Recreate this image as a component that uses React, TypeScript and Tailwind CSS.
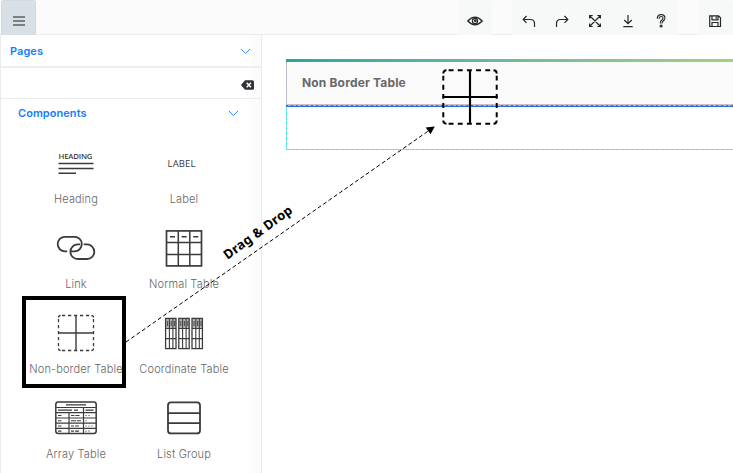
import type { ReactNode } from 'react';

const ink = '#3b3b3b';

function Glyph({ children, w = 18 }: { children: ReactNode; w?: number }) {
  return (
    <svg width={w} height="16" viewBox={`0 0 ${w} 16`} fill="none" stroke="#25282b" strokeWidth="1.2" className="block shrink-0">
      {children}
    </svg>
  );
}

function Chevron() {
  return (
    <svg width="11" height="7" viewBox="0 0 11 7" fill="none" stroke="#3590ff" strokeWidth="1" className="block">
      <path d="M1 1l4.5 4.5L10 1" />
    </svg>
  );
}

function TableCross({ size, color }: { size: number; color: string }) {
  return (
    <svg width={size} height={size} viewBox="0 0 38 38" fill="none" stroke={color} className="block">
      <path d="M5 1.5h28M5 36.5h28M1.5 5v28M36.5 5v28" strokeWidth="1.3" strokeDasharray="3.2 2.8" />
      <path d="M1.5 3.6Q1.5 1.5 3.6 1.5M34.4 1.5Q36.5 1.5 36.5 3.6M36.5 34.4Q36.5 36.5 34.4 36.5M3.6 36.5Q1.5 36.5 1.5 34.4" strokeWidth="1.3" />
      <path d="M19 1.5v35M1 19h36" strokeWidth="1.4" />
    </svg>
  );
}

function HeadingIcon() {
  return (
    <svg width="40" height="40" viewBox="0 0 40 40" className="block overflow-visible">
      <text x="2.5" y="15.5" fontFamily="'Open Sans', sans-serif" fontSize="7.8" fontWeight="600" textLength="34" fill={ink}>HEADING</text>
      <path d="M2.5 20.5h35M2.5 25.5h35M2.5 30.2h17.5" stroke={ink} strokeWidth="1.4" />
    </svg>
  );
}

function LabelIcon() {
  return (
    <svg width="40" height="40" viewBox="0 0 40 40" className="block overflow-visible">
      <text x="3.5" y="23.5" fontFamily="'Open Sans', sans-serif" fontSize="9.5" fontWeight="500" textLength="28" fill={ink}>LABEL</text>
    </svg>
  );
}

function LinkIcon() {
  return (
    <svg width="40" height="40" viewBox="0 0 40 40" fill="none" stroke={ink} strokeWidth="1.8" className="block">
      <path d="M11.2 23.4H9A7.3 7.3 0 0 1 9 8.8h9.5A7.3 7.3 0 0 1 18.5 23.4h-3.7" />
      <path d="M24.2 16.4H21.7a7.3 7.3 0 0 0 0 14.6h9.3a7.3 7.3 0 0 0 0-14.6h-3.3" />
    </svg>
  );
}

function NormalTableIcon() {
  return (
    <svg width="40" height="40" viewBox="0 0 40 40" fill="none" stroke={ink} className="block">
      <rect x="2.5" y="2.9" width="35" height="35" strokeWidth="1.7" />
      <path d="M14.3 3v35M25.8 3v35M2.5 14.4h35M2.5 26.5h35" strokeWidth="1.5" />
      <path d="M6 8.8h5M17.6 8.8h5M29.2 8.8h5" strokeWidth="1.6" />
    </svg>
  );
}

function CoordinateTableIcon() {
  return (
    <svg width="40" height="40" viewBox="0 0 40 40" fill="none" stroke={ink} className="block">
      {[1.6, 14.8, 28].map((x) => (
        <g key={x} transform={`translate(${x} 0)`}>
          <rect x="0" y="5.4" width="10.4" height="10.2" fill="#b9b9b9" stroke="none" />
          <rect x="0" y="5.4" width="10.4" height="30.2" strokeWidth="1.3" />
          <path d="M3.8 5.4v30M7.3 5.4v30M0 15.5h10.4M0 25.6h10.4" strokeWidth="1.1" />
          <path d="M2 8v5M5.6 8v5M9 8v5" strokeWidth="0.9" />
        </g>
      ))}
    </svg>
  );
}

function ArrayTableIcon() {
  return (
    <svg width="42" height="40" viewBox="0 0 42 40" fill="none" stroke={ink} className="block">
      <rect x=".8" y="4" width="40.4" height="31.6" rx="2.5" strokeWidth="1.5" />
      <path d="M1 9.5h40M1 14.6h40M1 20h40M1 25.2h40M1 30.4h40M28.5 9.5v26M14 14.6v21" strokeWidth="1.2" />
      <path d="M11 6.9h20M3 12.1h14M19 12.1h4M30.5 12.1h8" strokeWidth="1.1" />
      <path d="M3 17.5h3.5M3 22.8h3.5M3 28h3.5M3 33.1h3.5M16 17.5h3.5m1 0h4M16 22.8h5m1 0h4M16 28h3m1 0h4M16 33.1h3m1 0h4" strokeWidth="1.1" />
      <path d="M30.5 17.5h1m2 0h1M30.5 22.8h1M30.5 28h1m2 0h1m2 0h1M30.5 33.1h1m2 0h1" strokeWidth="1.1" />
    </svg>
  );
}

function ListGroupIcon() {
  return (
    <svg width="40" height="40" viewBox="0 0 40 40" fill="none" stroke={ink} strokeWidth="1.8" className="block">
      <rect x="4" y="4.4" width="32" height="31" rx="3" />
      <path d="M4 15.2h32M4 25.2h32" />
    </svg>
  );
}

const components: { name: string; icon: ReactNode }[] = [
  { name: 'Heading', icon: <HeadingIcon /> },
  { name: 'Label', icon: <LabelIcon /> },
  { name: 'Link', icon: <LinkIcon /> },
  { name: 'Normal Table', icon: <NormalTableIcon /> },
  { name: 'Non-border Table', icon: <TableCross size={38} color={ink} /> },
  { name: 'Coordinate Table', icon: <CoordinateTableIcon /> },
  { name: 'Array Table', icon: <ArrayTableIcon /> },
  { name: 'List Group', icon: <ListGroupIcon /> },
];

function Toolbar() {
  return (
    <header className="flex h-[35px] shrink-0 border-b border-[#ececec] bg-[#fbfbfb] pl-px">
      <div className="flex h-[35px] w-[35px] items-center justify-center rounded-t-[3px] border border-b-0 border-[#d0d8e0] bg-[#d9dfe7] pt-[6px]">
        <svg width="12" height="10" viewBox="0 0 12 10" fill="none" stroke="#7c8080" strokeWidth="2" className="block">
          <path d="M0 1h12M0 5h12M0 9h12" />
        </svg>
      </div>
      <div className="ml-auto flex h-[35px]">
        <div className="mr-5 flex w-[34px] items-center justify-center rounded-t bg-[#f7f9f8] pt-[7px]">
          <Glyph>
            <path d="M1.8 8Q9 .4 16.2 8Q9 15.6 1.8 8z" />
            <circle cx="9" cy="8" r="2.6" />
            <circle cx="9.3" cy="7.7" r=".8" fill="#25282b" />
          </Glyph>
        </div>
        <div className="mr-5 flex w-[166px] items-center justify-center gap-[15px] rounded-t bg-[#f7f9f8] pt-[7px]">
          <Glyph><path d="M6.5 3L3.2 6.5l3.3 3.3M3.2 6.5h7.3q4 0 4 4V14" /></Glyph>
          <Glyph><path d="M11.5 3l3.3 3.5-3.3 3.3M14.8 6.5H7.5q-4 0-4 4V14" /></Glyph>
          <Glyph><path d="M3.6 5.6V2.5h3.1M11.3 2.5h3.1v3.1M14.4 10.4v3.1h-3.1M6.7 13.5H3.6v-3.1M4 3l10 10M14 3L4 13" /></Glyph>
          <Glyph><path d="M9 2v8.5M5.2 7l3.8 3.7L12.8 7M4.3 13.6h9.4" /></Glyph>
          <Glyph>
            <path d="M6.2 5.8Q6.2 2.5 9.1 2.5Q12 2.5 12 5.1Q12 6.6 10.3 7.7Q9.2 8.4 9.2 10.5" strokeWidth="3" />
            <path d="M6.2 5.8Q6.2 2.5 9.1 2.5Q12 2.5 12 5.1Q12 6.6 10.3 7.7Q9.2 8.4 9.2 10.5" stroke="#f7f9f8" strokeWidth=".9" />
            <circle cx="9.1" cy="13" r="1" />
          </Glyph>
        </div>
        <div className="flex w-[35px] items-center justify-center rounded-t bg-[#f7f9f8] pt-[7px] pr-[2px]">
          <Glyph><path d="M3.7 2.8h8.8l2 2v8.7H3.7zM6 3v3.8h6V3M6 13.4V9.5h6v3.9M10.2 3.7v2" /></Glyph>
        </div>
      </div>
    </header>
  );
}

function Sidebar() {
  return (
    <aside className="w-[261px] shrink-0 border-r border-[#ebebeb] bg-gradient-to-r from-white from-[94%] to-[#fafafa]">
      <div className="flex h-[31px] items-center justify-between pt-[2px] pr-[10px] pl-[9px] text-[11px] font-semibold text-[#167dff]">
        <span className="tracking-[0.05px]">Pages</span>
        <Chevron />
      </div>
      <div className="flex h-8 items-center justify-end border-t-2 border-[#eeeeee] pt-[3px] pr-[7px]">
        <svg width="13" height="10" viewBox="0 0 13 10" className="block">
          <path d="M4 .2h7.5Q13 .2 13 1.7v6.6q0 1.5-1.5 1.5H4L0 5z" fill="#303236" />
          <path d="M5.7 2.7l4.2 4.6M9.9 2.7L5.7 7.3" stroke="white" strokeWidth="1.5" />
        </svg>
      </div>
      <div className="flex h-[31px] items-center justify-between border-t border-[#ececec] pr-[22px] pb-[2px] pl-[17px] text-[11px] font-semibold text-[#167dff]">
        <span className="tracking-[0.05px]">Components</span>
        <Chevron />
      </div>
      <div className="ml-[21px] grid w-[216px] grid-cols-2 pt-[14px]">
        {components.map((item) => (
          <div key={item.name} className="flex h-[85px] flex-col items-center">
            <div className="flex h-10 items-center justify-center">{item.icon}</div>
            <span className="mt-[8px] text-[11px] leading-4 font-light tracking-[0.15px] whitespace-nowrap text-[#666666]">{item.name}</span>
          </div>
        ))}
      </div>
    </aside>
  );
}

function Canvas() {
  return (
    <main className="min-w-0 flex-1 bg-white pt-6 pl-6">
      <div className="h-[3px] bg-gradient-to-r from-[#20a5a5] to-[#a5cf83]" />
      <div className="flex h-[42px] items-center border-l border-[#b8bdc8] bg-[#fafafa] pl-[15px] text-[12px] font-bold text-[#686868]">
        <span className="tracking-[0.17px]">Non Border Table</span>
      </div>
      <div className="h-px bg-[#c4c4c4]" />
      <div className="h-px bg-[repeating-linear-gradient(90deg,#7662a8_0_2px,#48dce8_2px_5px)]" />
      <div className="h-px bg-[#326be1]" />
      <div className="flex h-[43px] flex-col">
        <div className="w-px flex-1 bg-[repeating-linear-gradient(180deg,#32f3f5_0_3px,#b3d4d6_3px_5px)]" />
        <div className="h-px bg-[repeating-linear-gradient(90deg,#32f3f5_0_3px,#b3d4d6_3px_5px)]" />
      </div>
    </main>
  );
}

export default function App() {
  return (
    <div className="relative flex h-[473px] w-[733px] flex-col overflow-hidden bg-white font-[Inter,sans-serif]">
      <Toolbar />
      <div className="flex min-h-0 flex-1 border-l border-[#ebebeb]">
        <Sidebar />
        <Canvas />
      </div>
      <div className="absolute top-[296px] left-[22px] h-[92px] w-[104px] border-4 border-black" />
      <div className="absolute top-[67.5px] left-[441px]">
        <TableCross size={58} color="#000" />
      </div>
      <svg width="733" height="473" viewBox="0 0 733 473" className="pointer-events-none absolute inset-0">
        <path d="M126 342L429 130.5" stroke="#000" strokeWidth="1" strokeDasharray="4 2.5" fill="none" />
        <path d="M434.8 126.5L430.5 134.3L425.7 127.6z" fill="#000" />
        <text transform="translate(227.5 260) rotate(-36)" fontFamily="'Noto Sans', sans-serif" fontSize="13" fontWeight="700" textLength="81.5" fill="#000">Drag &amp; Drop</text>
      </svg>
    </div>
  );
}
